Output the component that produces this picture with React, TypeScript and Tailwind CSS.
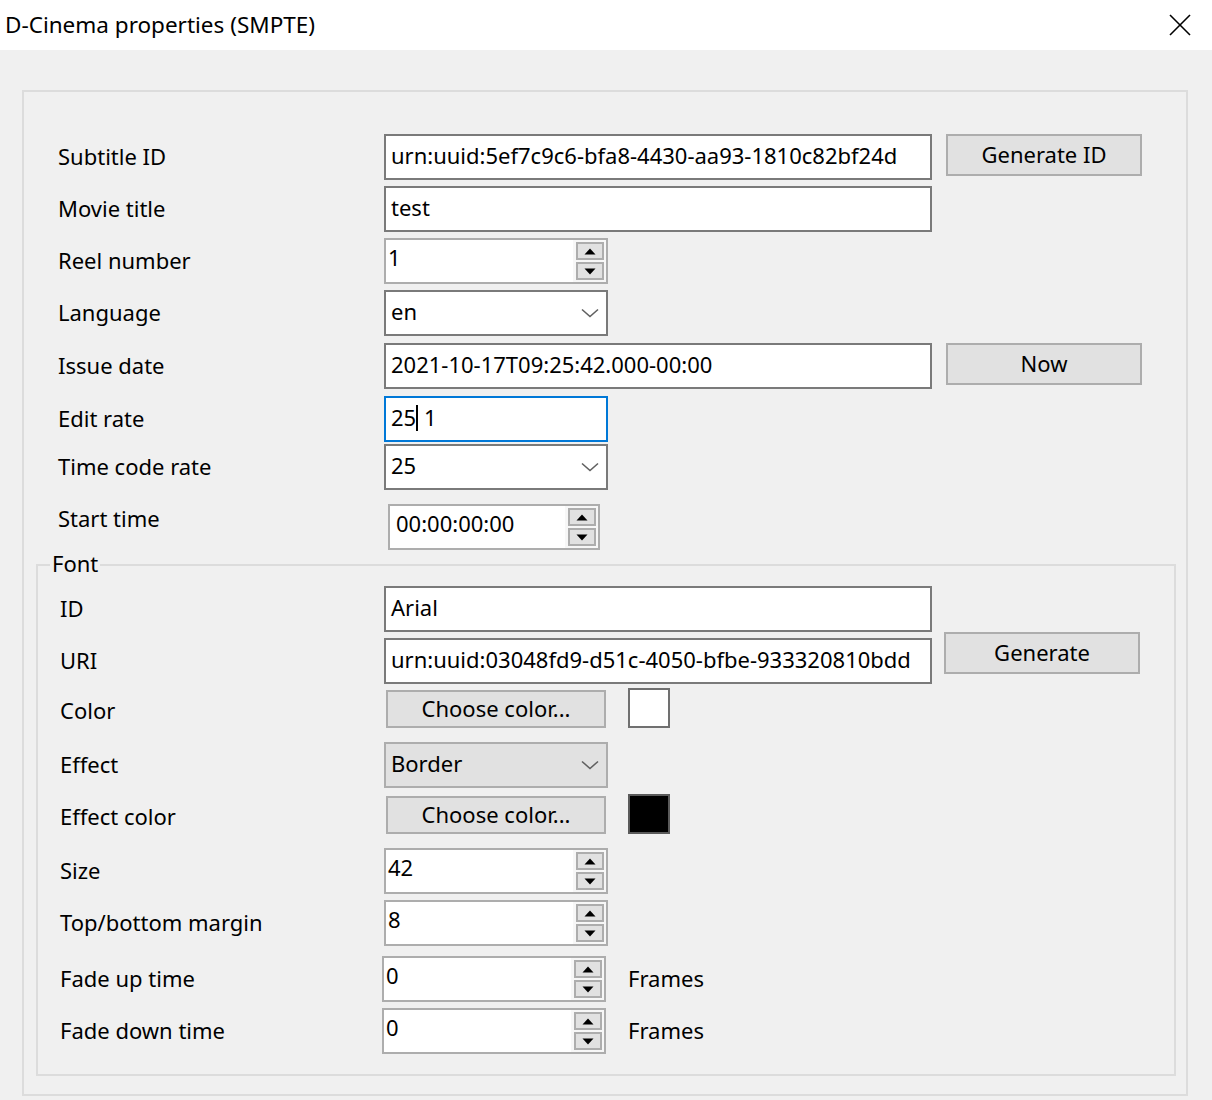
import React from "react";

const Label = ({ text, className }: { text: string; className: string }) => (
    <div className={"shrink-0 text-[22px] leading-[28px] pb-[3px] text-black " + className}>{text}</div>
);

const TextBox = ({ value, className, focused }: { value: string; className: string; focused?: boolean }) => (
    <div
        className={
            "h-[46px] bg-white border-2 flex items-center pl-[5px] pb-[3px] text-[22px] text-black whitespace-nowrap overflow-hidden " +
            (focused ? "border-[#0078d7] " : "border-[#7a7a7a] ") +
            className
        }
    >
        {value}
    </div>
);

const Arrow = ({ down }: { down?: boolean }) => (
    <svg width="12" height="7" viewBox="0 0 12 7">
        {down ? <polygon points="0.5,0.5 11.5,0.5 6,6.5" fill="#000" /> : <polygon points="0.5,6.5 11.5,6.5 6,0.5" fill="#000" />}
    </svg>
);

const SpinBox = ({ value, className }: { value: string; className: string }) => (
    <div className={"h-[46px] bg-white border-2 border-[#adadad] flex " + className}>
        <div className="flex-1 flex items-center pl-[2px] pb-[7px] text-[22px] text-black">{value}</div>
        <div className="flex flex-col gap-[2px] py-[2px] pl-[3px] pr-[2px] bg-[#f7f7f7]">
            <div className="w-[28px] h-[18px] bg-[#e1e1e1] border-2 border-[#adadad] flex items-center justify-center">
                <Arrow />
            </div>
            <div className="w-[28px] h-[18px] bg-[#e1e1e1] border-2 border-[#adadad] flex items-center justify-center">
                <Arrow down />
            </div>
        </div>
    </div>
);

const Chevron = () => (
    <svg width="18" height="10" viewBox="0 0 18 10" className="mr-[7px]">
        <polyline points="1,1.5 9,8.5 17,1.5" fill="none" stroke="#606060" strokeWidth="1.6" />
    </svg>
);

const ComboBox = ({ value, gray }: { value: string; gray?: boolean }) => (
    <div
        className={
            "w-[224px] h-[46px] border-2 flex items-center justify-between pl-[5px] text-[22px] text-black " +
            (gray ? "bg-[#e1e1e1] border-[#adadad]" : "bg-white border-[#7a7a7a]")
        }
    >
        <span className="pb-[3px]">{value}</span>
        <Chevron />
    </div>
);

const Button = ({ text, className }: { text: string; className: string }) => (
    <div
        className={
            "bg-[#e1e1e1] border-2 border-[#adadad] flex items-center justify-center pb-[2px] text-[22px] text-black " + className
        }
    >
        {text}
    </div>
);

const Swatch = ({ className }: { className: string }) => (
    <div className={"ml-[22px] w-[42px] h-[40px] border-2 " + className} />
);

export default function App() {
    return (
        <div className="w-[1212px] h-[1100px] bg-[#f0f0f0] overflow-hidden font-['Noto_Sans',sans-serif]">
            {/* title bar */}
            <div className="h-[50px] bg-white flex items-center justify-between pl-[5px] pr-[21px]">
                <div className="text-[22.5px] text-black">D-Cinema properties (SMPTE)</div>
                <svg width="22" height="22" viewBox="0 0 22 22">
                    <line x1="1" y1="1" x2="21" y2="21" stroke="#000" strokeWidth="1.6" />
                    <line x1="21" y1="1" x2="1" y2="21" stroke="#000" strokeWidth="1.6" />
                </svg>
            </div>

            <div className="mt-[40px] ml-[22px] w-[1166px] border-2 border-[#dcdcdc] pb-[18px]">
                <div className="flex items-center h-[46px] mt-[42px] pl-[34px]">
                    <Label text="Subtitle ID" className="w-[326px]" />
                    <TextBox value="urn:uuid:5ef7c9c6-bfa8-4430-aa93-1810c82bf24d" className="w-[548px]" />
                    <Button text="Generate ID" className="self-start ml-[14px] w-[196px] h-[42px]" />
                </div>
                <div className="flex items-center h-[46px] mt-[6px] pl-[34px]">
                    <Label text="Movie title" className="w-[326px]" />
                    <TextBox value="test" className="w-[548px]" />
                </div>
                <div className="flex items-center h-[46px] mt-[6px] pl-[34px]">
                    <Label text="Reel number" className="w-[326px]" />
                    <SpinBox value="1" className="w-[224px]" />
                </div>
                <div className="flex items-center h-[46px] mt-[6px] pl-[34px]">
                    <Label text="Language" className="w-[326px]" />
                    <ComboBox value="en" />
                </div>
                <div className="flex items-center h-[46px] mt-[7px] pl-[34px]">
                    <Label text="Issue date" className="w-[326px]" />
                    <TextBox value="2021-10-17T09:25:42.000-00:00" className="w-[548px]" />
                    <Button text="Now" className="self-start ml-[14px] w-[196px] h-[42px]" />
                </div>
                <div className="flex items-center h-[46px] mt-[7px] pl-[34px]">
                    <Label text="Edit rate" className="w-[326px]" />
                    <div className="w-[224px] h-[46px] bg-white border-2 border-[#0078d7] flex items-center pl-[5px] pb-[3px] text-[22px] text-black">
                        <span>25</span>
                        <span className="w-[2px] h-[26px] bg-black" />
                        <span className="whitespace-pre"> 1</span>
                    </div>
                </div>
                <div className="flex items-center h-[46px] mt-[2px] pl-[34px]">
                    <Label text="Time code rate" className="w-[326px]" />
                    <ComboBox value="25" />
                </div>
                <div className="flex items-start h-[46px] mt-[14px] pl-[34px]">
                    <Label text="Start time" className="w-[330px]" />
                    <SpinBox value="00:00:00:00" className="w-[212px] pl-[4px]" />
                </div>

                <fieldset className="mt-[1px] ml-[12px] w-[1140px] border-2 border-[#dcdcdc] pb-[20px]">
                    <legend className="ml-[12px] px-[2px] h-[28px] text-[22px] leading-[24px] text-black">Font</legend>
                    <div className="flex items-center h-[46px] mt-[7px] pl-[22px]">
                        <Label text="ID" className="w-[324px]" />
                        <TextBox value="Arial" className="w-[548px]" />
                    </div>
                    <div className="flex items-center h-[46px] mt-[6px] pl-[22px]">
                        <Label text="URI" className="w-[324px]" />
                        <TextBox value="urn:uuid:03048fd9-d51c-4050-bfbe-933320810bdd" className="w-[548px]" />
                        <Button text="Generate" className="self-start -mt-[6px] ml-[12px] w-[196px] h-[42px]" />
                    </div>
                    <div className="flex items-center h-[40px] mt-[4px] pl-[22px]">
                        <Label text="Color" className="w-[326px] pt-[6px]" />
                        <Button text="Choose color..." className="self-end w-[220px] h-[38px]" />
                        <Swatch className="bg-white border-[#707070]" />
                    </div>
                    <div className="flex items-center h-[46px] mt-[14px] pl-[22px]">
                        <Label text="Effect" className="w-[324px]" />
                        <ComboBox value="Border" gray />
                    </div>
                    <div className="flex items-center h-[40px] mt-[6px] pl-[22px]">
                        <Label text="Effect color" className="w-[326px] pt-[6px]" />
                        <Button text="Choose color..." className="self-end w-[220px] h-[38px]" />
                        <Swatch className="bg-black border-[#5a5a5a]" />
                    </div>
                    <div className="flex items-center h-[46px] mt-[14px] pl-[22px]">
                        <Label text="Size" className="w-[324px]" />
                        <SpinBox value="42" className="w-[224px]" />
                    </div>
                    <div className="flex items-center h-[46px] mt-[6px] pl-[22px]">
                        <Label text="Top/bottom margin" className="w-[324px]" />
                        <SpinBox value="8" className="w-[224px]" />
                    </div>
                    <div className="flex items-center h-[46px] mt-[10px] pl-[22px]">
                        <Label text="Fade up time" className="w-[322px]" />
                        <SpinBox value="0" className="w-[224px]" />
                        <Label text="Frames" className="ml-[22px]" />
                    </div>
                    <div className="flex items-center h-[46px] mt-[6px] pl-[22px]">
                        <Label text="Fade down time" className="w-[322px]" />
                        <SpinBox value="0" className="w-[224px]" />
                        <Label text="Frames" className="ml-[22px]" />
                    </div>
                </fieldset>
            </div>
        </div>
    );
}
